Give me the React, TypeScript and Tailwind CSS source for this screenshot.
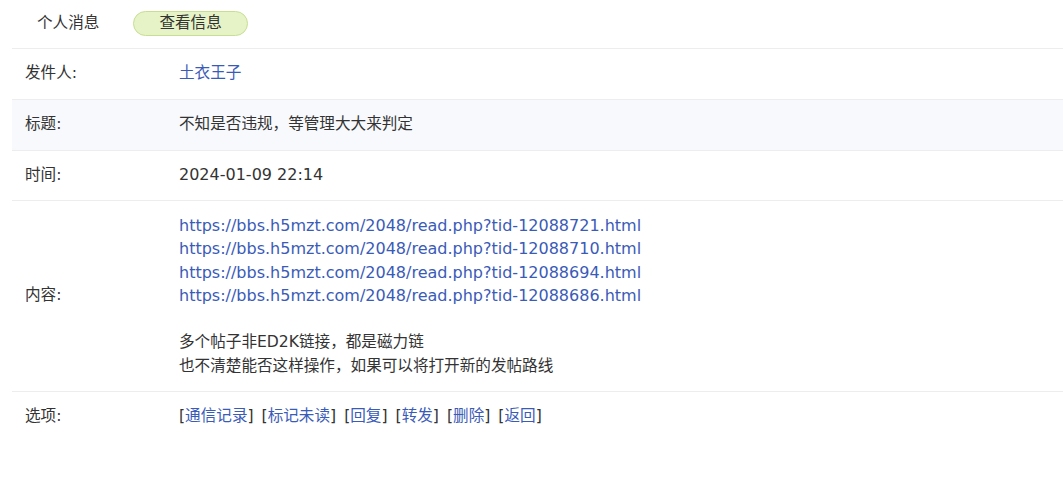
const font = { fontFamily: '"DejaVu Sans", "Noto Sans CJK SC", sans-serif' };

const urls = [
  "https://bbs.h5mzt.com/2048/read.php?tid-12088721.html",
  "https://bbs.h5mzt.com/2048/read.php?tid-12088710.html",
  "https://bbs.h5mzt.com/2048/read.php?tid-12088694.html",
  "https://bbs.h5mzt.com/2048/read.php?tid-12088686.html",
];

const actions = ["通信记录", "标记未读", "回复", "转发", "删除", "返回"];

function Row({
  label,
  children,
  shaded,
  last,
  h = "min-h-[51px]",
}: {
  label: string;
  children: React.ReactNode;
  shaded?: boolean;
  last?: boolean;
  h?: string;
}) {
  return (
    <div
      className={`flex items-center ${h} ${last ? "" : "border-b border-[#ededed]"} ${
        shaded ? "bg-[#f7f9fc]" : "bg-white"
      }`}
    >
      <div className="w-[167px] shrink-0 pl-[13px] text-[15.6px] text-[#333]">{label}</div>
      <div className="flex-1 text-[15.6px] text-[#333]">{children}</div>
    </div>
  );
}

export default function App() {
  return (
    <div className="w-[1063px] h-[486px] bg-white overflow-hidden" style={font}>
      <div className="ml-3">
        <div className="flex items-center gap-[9px] h-[49px] border-b border-[#ededed] pb-[1px]">
          <span className="h-[25px] px-[25px] flex items-center text-[15.6px] text-[#333]">
            个人消息
          </span>
          <span className="h-[25px] px-[25px] flex items-center text-[15.6px] text-[#333] rounded-full bg-[#e6f3c6] border border-[#c8de93]">
            查看信息
          </span>
        </div>

        <Row label="发件人:">
          <a className="text-[#3a5bb8]">土衣王子</a>
        </Row>
        <Row label="标题:" shaded>
          不知是否违规，等管理大大来判定
        </Row>
        <Row label="时间:" h="min-h-[50px]">
          <span className="text-[16px]">2024-01-09 22:14</span>
        </Row>
        <div className="flex items-center border-b border-[#ededed] py-[12.5px]">
          <div className="w-[167px] shrink-0 pl-[13px] text-[15.6px] text-[#333]">内容:</div>
          <div className="flex-1 leading-[23.5px] text-[#333]">
            {urls.map((u) => (
              <div key={u} className="text-[16px] text-[#3a5bb8]">
                {u}
              </div>
            ))}
            <div className="h-[23.5px]" />
            <div className="text-[15.6px]">多个帖子非ED2K链接，都是磁力链</div>
            <div className="text-[15.6px]">也不清楚能否这样操作，如果可以将打开新的发帖路线</div>
          </div>
        </div>
        <Row label="选项:" last>
          <span className="flex gap-[8px]">
            {actions.map((a) => (
              <span key={a}>
                [<a className="text-[#3a5bb8]">{a}</a>]
              </span>
            ))}
          </span>
        </Row>
      </div>
    </div>
  );
}
